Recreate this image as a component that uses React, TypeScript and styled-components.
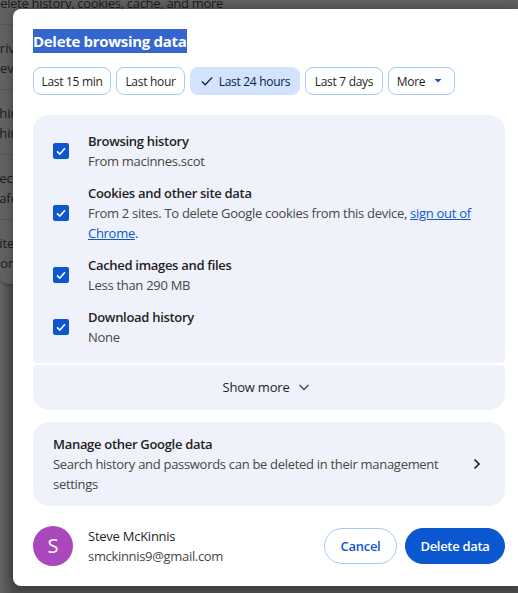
import { createGlobalStyle, styled } from 'styled-components'

const GlobalStyle = createGlobalStyle`
  html, body {
    margin: 0;
    padding: 0;
    background: #4a4a4a;
  }
  body {
    font-family: "Open Sans", "Noto Sans", "Liberation Sans", sans-serif;
    font-size: 13px;
    line-height: 20px;
    overflow: hidden;
  }
`

const Page = styled.div`
  position: relative;
  width: 518px;
  height: 593px;
  overflow: hidden;
  background: linear-gradient(90deg, #646464 0, #4c4c4c 13px);
`

const BehindCard = styled.div`
  height: 284px;
  background: #626262;
  border-radius: 0 0 8px 8px;
  color: #1c1c1c;
  box-shadow: 0 1px 3px rgba(0, 0, 0, 0.3);
`

const BehindHeader = styled.div`
  height: 24px;
  font-size: 13px;
  line-height: 7px;
  white-space: nowrap;
  margin-left: -9px;
  letter-spacing: -0.3px;
`

const BehindRow = styled.div`
  height: 65px;
  box-sizing: border-box;
  padding-top: 13px;
  border-top: 1px solid #575757;
  margin-left: -8px;
  white-space: nowrap;
`

const Dialog = styled.section`
  position: absolute;
  left: 13px;
  top: 9px;
  width: 505px;
  height: 577px;
  box-sizing: border-box;
  padding: 20px 13px 0 20px;
  background: #fff;
  border-radius: 8px 0 0 8px;
  color: #1f1f1f;
  box-shadow: 0 0 12px rgba(0, 0, 0, 0.35);
`

const Title = styled.h2`
  margin: 0;
  height: 24px;
  width: fit-content;
  background: #3565cf;
  color: #fff;
  font-size: 15px;
  font-weight: 700;
  line-height: 24px;
  letter-spacing: -0.3px;
`

const Chips = styled.div`
  display: flex;
  gap: 5px;
  margin-top: 14px;
`

const Chip = styled.button<{ $selected?: boolean; $width: number }>`
  display: flex;
  align-items: center;
  justify-content: center;
  gap: 5px;
  width: ${({ $width }) => $width}px;
  height: 28px;
  padding: 2px 0 0;
  border: 1px solid ${({ $selected }) => ($selected ? '#d3e3fd' : '#a8c7fa')};
  border-radius: 8px;
  background: ${({ $selected }) => ($selected ? '#d3e3fd' : '#fff')};
  color: ${({ $selected }) => ($selected ? '#041e49' : '#1f1f1f')};
  font: inherit;
  font-size: 12px;
  font-weight: 500;
  letter-spacing: -0.3px;
`

const ChipCheck = styled.svg`
  margin-top: -2px;
`

const ChipArrow = styled.svg`
  margin-top: -2px;
`

const Panel = styled.div`
  margin-top: 20px;
  width: 472px;
  height: 248px;
  box-sizing: border-box;
  padding: 16px 20px 0;
  background: #eff2fa;
  border-radius: 16px 16px 4px 4px;
  display: flex;
  flex-direction: column;
  gap: 12px;
`

const Item = styled.div`
  display: flex;
  align-items: center;
  gap: 19px;
`

const Box = styled.span`
  flex: none;
  width: 16px;
  height: 16px;
  border-radius: 2px;
  background: #0b57d0;
  display: flex;
  align-items: center;
  justify-content: center;
`

const ItemName = styled.div`
  font-weight: 600;
  letter-spacing: -0.3px;
  color: #1f1f1f;
`

const ItemSub = styled.div`
  color: #474747;
  letter-spacing: -0.29px;
`

const SignOut = styled.a`
  color: #0b57d0;
  text-decoration: underline;
`

const ShowMore = styled.button`
  display: flex;
  align-items: center;
  justify-content: center;
  gap: 7px;
  width: 472px;
  height: 45px;
  margin-top: 2px;
  padding: 0 5px 2px 0;
  border: 0;
  border-radius: 4px 4px 16px 16px;
  background: #eff2fa;
  color: #1f1f1f;
  font: inherit;
  font-weight: 500;
  letter-spacing: -0.2px;
`

const ManageCard = styled.div`
  display: flex;
  align-items: center;
  justify-content: space-between;
  width: 472px;
  height: 84px;
  box-sizing: border-box;
  margin-top: 12px;
  padding: 0 22px 0 20px;
  background: #eff2fa;
  border-radius: 16px;
`

const ManageText = styled.div`
  width: 400px;
  color: #474747;
  letter-spacing: -0.3px;
`

const ManageName = styled.div`
  color: #1f1f1f;
  font-weight: 600;
`

const Footer = styled.div`
  display: flex;
  align-items: center;
  width: 472px;
  margin-top: 20px;
`

const Avatar = styled.div`
  width: 40px;
  height: 40px;
  border-radius: 50%;
  background: #ab47bc;
  color: #fff;
  font-size: 20px;
  display: flex;
  align-items: center;
  justify-content: center;
`

const Account = styled.div`
  margin-left: 15px;
  flex: 1;
  letter-spacing: -0.25px;
  color: #1f1f1f;
`

const AccountMail = styled.div`
  color: #474747;
  letter-spacing: -0.32px;
`

const Pill = styled.button<{ $primary?: boolean }>`
  height: 36px;
  width: ${({ $primary }) => ($primary ? 100 : 73)}px;
  margin-left: ${({ $primary }) => ($primary ? 8 : 0)}px;
  padding: 0;
  border: 1px solid ${({ $primary }) => ($primary ? '#0b57d0' : '#a8c7fa')};
  border-radius: 18px;
  background: ${({ $primary }) => ($primary ? '#0b57d0' : '#fff')};
  color: ${({ $primary }) => ($primary ? '#fff' : '#0b57d0')};
  font: inherit;
  font-weight: 600;
  letter-spacing: -0.3px;
`

const Check = () => (
  <svg width="12" height="12" viewBox="0 0 12 12" fill="none">
    <path d="M2 6.4 4.8 9 10 3.3" stroke="#fff" strokeWidth="1.6" />
  </svg>
)

const items = [
  { name: 'Browsing history', sub: 'From macinnes.scot' },
  {
    name: 'Cookies and other site data',
    sub: (
      <>
        From 2 sites. To delete Google cookies from this device, <SignOut href="#">sign out of Chrome</SignOut>.
      </>
    ),
  },
  { name: 'Cached images and files', sub: 'Less than 290 MB' },
  { name: 'Download history', sub: 'None' },
]

const behindRows = [
  ['Priv', 'Rev'],
  ['Thin', 'Thin'],
  ['Sec', 'Safe'],
  ['Site', 'Con'],
]

export default function App() {
  return (
    <>
      <GlobalStyle />
      <Page>
        <BehindCard>
          <BehindHeader>Delete history, cookies, cache, and more</BehindHeader>
          {behindRows.map((row) => (
            <BehindRow key={row[0]}>
              <div>{row[0]}</div>
              <div>{row[1]}</div>
            </BehindRow>
          ))}
        </BehindCard>
        <Dialog>
          <Title>Delete browsing data</Title>
          <Chips>
            <Chip $width={78}>Last 15 min</Chip>
            <Chip $width={69}>Last hour</Chip>
            <Chip $width={110} $selected>
              <ChipCheck width="14" height="14" viewBox="0 0 14 14" fill="none">
                <path d="M1.8 7.4 5.2 10.8 12.2 3.4" stroke="#041e49" strokeWidth="1.3" />
              </ChipCheck>
              Last 24 hours
            </Chip>
            <Chip $width={78}>Last 7 days</Chip>
            <Chip $width={67}>
              More
              <ChipArrow width="16" height="8" viewBox="0 0 16 8">
                <path d="M4.5 2h7L8 5.5z" fill="#0b57d0" />
              </ChipArrow>
            </Chip>
          </Chips>
          <Panel>
            {items.map((item) => (
              <Item key={item.name}>
                <Box>
                  <Check />
                </Box>
                <div>
                  <ItemName>{item.name}</ItemName>
                  <ItemSub>{item.sub}</ItemSub>
                </div>
              </Item>
            ))}
          </Panel>
          <ShowMore>
            Show more
            <svg width="14" height="14" viewBox="0 0 14 14" fill="none">
              <path d="M2.5 5 7 9.5 11.5 5" stroke="#444746" strokeWidth="1.3" />
            </svg>
          </ShowMore>
          <ManageCard>
            <ManageText>
              <ManageName>Manage other Google data</ManageName>
              Search history and passwords can be deleted in their management settings
            </ManageText>
            <svg width="12" height="12" viewBox="0 0 12 12" fill="none">
              <path d="M3.5 1.5 8 6 3.5 10.5" stroke="#1f1f1f" strokeWidth="1.7" />
            </svg>
          </ManageCard>
          <Footer>
            <Avatar>S</Avatar>
            <Account>
              <div>Steve McKinnis</div>
              <AccountMail>smckinnis9@gmail.com</AccountMail>
            </Account>
            <Pill>Cancel</Pill>
            <Pill $primary>Delete data</Pill>
          </Footer>
        </Dialog>
      </Page>
    </>
  )
}
